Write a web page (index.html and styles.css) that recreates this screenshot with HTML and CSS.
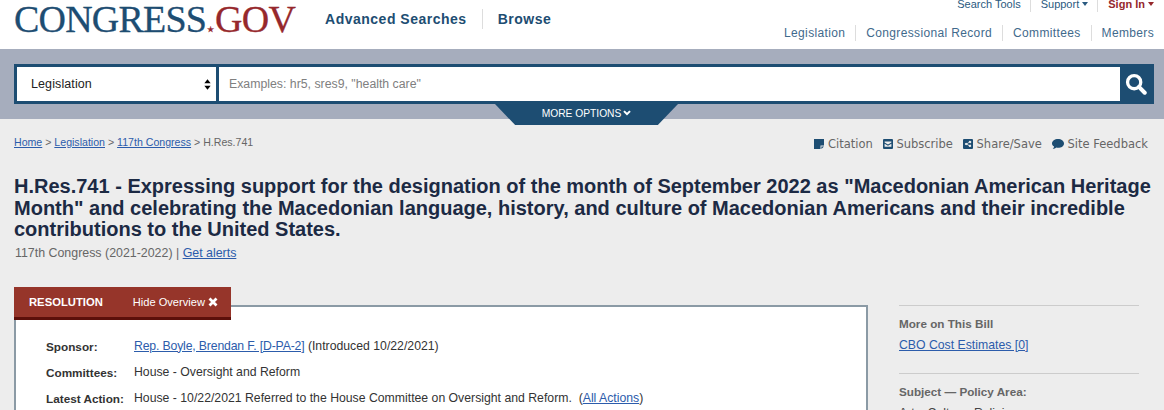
FILE: index.html
```html
<!DOCTYPE html>
<html lang="en">
<head>
    <meta charset="UTF-8">
    <meta name="viewport" content="width=device-width, initial-scale=1.0">
    <link rel="stylesheet" href="styles.css">
    <title>H.Res.741 - Congress.gov</title>
</head>
<body>
    <header class="site-header">
        <a class="logo" href="#">CONGRESS<span class="logo-gov"><span class="logo-star">★</span>GOV</span></a>
        <nav class="main-nav">
            <a href="#">Advanced Searches</a>
            <a href="#">Browse</a>
        </nav>
        <div class="header-right">
            <nav class="util-nav">
                <a href="#">Search Tools</a>
                <a href="#">Support <span class="caret"></span></a>
                <a class="sign-in" href="#">Sign In <span class="caret"></span></a>
            </nav>
            <nav class="collection-nav">
                <a href="#">Legislation</a>
                <a href="#">Congressional Record</a>
                <a href="#">Committees</a>
                <a href="#">Members</a>
            </nav>
        </div>
    </header>

    <section class="search-band">
        <form class="search-box">
            <div class="search-select">
                <span>Legislation</span>
                <svg class="updown" viewBox="0 0 8 12" width="7" height="11"><path d="M4 0l3.6 4.6H.4zM4 12L.4 7.4h7.2z"/></svg>
            </div>
            <div class="search-input">Examples: hr5, sres9, "health care"</div>
            <button class="search-btn" type="button" aria-label="Search">
                <svg viewBox="0 0 24 24" width="22" height="22"><circle cx="10" cy="10" r="7.2" fill="none" stroke="#fff" stroke-width="3.6"/><path d="M15.2 15.2l6.3 6.3" stroke="#fff" stroke-width="4.4" stroke-linecap="round"/></svg>
            </button>
        </form>
        <a class="more-options" href="#">MORE OPTIONS
            <svg viewBox="0 0 10 8" width="8" height="6"><path d="M1 1.500l4 4 4-4" fill="none" stroke="#fff" stroke-width="2.800"/></svg>
        </a>
    </section>

    <main class="content">
        <div class="crumb-row">
            <div class="breadcrumb">
                <a href="#">Home</a> &gt; <a href="#">Legislation</a> &gt; <a href="#">117th Congress</a> &gt; H.Res.741
            </div>
            <div class="tools">
                <a href="#">
                    <svg viewBox="0 0 10 10" width="10" height="10"><path d="M0 0h10v6.5H6.5V10H0zM7.4 7.4H10L7.4 10z"/></svg>
                    Citation
                </a>
                <a href="#">
                    <svg viewBox="0 0 10 10" width="10" height="10"><path fill-rule="evenodd" d="M1 0h8a1 1 0 0 1 1 1v8a1 1 0 0 1-1 1H1a1 1 0 0 1-1-1V1a1 1 0 0 1 1-1zM1.6 2.4v1L5 5.4l3.4-2v-1zM1.6 4.8v3h6.8v-3L5 6.8z"/></svg>
                    Subscribe
                </a>
                <a href="#">
                    <svg viewBox="0 0 10 10" width="10" height="10"><path fill-rule="evenodd" d="M1 0h8a1 1 0 0 1 1 1v8a1 1 0 0 1-1 1H1a1 1 0 0 1-1-1V1a1 1 0 0 1 1-1zM7 1.800a1.200 1.200 0 0 0-1.200 1.400L4 4.200a1.200 1.200 0 1 0 0 1.600l1.800 1a1.200 1.200 0 1 0 .4-.8L4.500 5.200v-.4L6.200 3.800A1.200 1.200 0 1 0 7 1.800z"/></svg>
                    Share/Save
                </a>
                <a href="#">
                    <svg viewBox="0 0 12 10" width="12" height="10"><path d="M6 0c3.300 0 6 1.900 6 4.400S9.300 8.800 6 8.800c-.6 0-1.100-.1-1.600-.2C3.500 9.400 2.200 10 .8 10c.7-.7 1.200-1.500 1.300-2.400C.8 6.800 0 5.700 0 4.400 0 1.900 2.700 0 6 0z"/></svg>
                    Site Feedback
                </a>
            </div>
        </div>

        <h1 class="bill-title">H.Res.741 - Expressing support for the designation of the month of September 2022 as "Macedonian American Heritage Month" and celebrating the Macedonian language, history, and culture of Macedonian Americans and their incredible contributions to the United States.</h1>
        <p class="bill-sub">117th Congress (2021-2022) | <a href="#">Get alerts</a></p>

        <div class="columns">
            <div class="overview">
                <div class="overview-tab">
                    <span class="tab-type">RESOLUTION</span>
                    <a href="#">Hide Overview
                        <svg viewBox="0 0 10 10" width="10" height="10"><path d="M1.500 1.500l7 7M8.500 1.500l-7 7" stroke="#fff" stroke-width="2.800"/></svg>
                    </a>
                </div>
                <div class="overview-card">
                    <div class="overview-row">
                        <span class="row-label">Sponsor:</span>
                        <span><a class="sponsor-link" href="#">Rep. Boyle, Brendan F. [D-PA-2]</a> (Introduced 10/22/2021)</span>
                    </div>
                    <div class="overview-row">
                        <span class="row-label">Committees:</span>
                        <span>House - Oversight and Reform</span>
                    </div>
                    <div class="overview-row">
                        <span class="row-label">Latest Action:</span>
                        <span>House - 10/22/2021 Referred to the House Committee on Oversight and Reform.&nbsp; (<a href="#">All Actions</a>)</span>
                    </div>
                </div>
            </div>

            <aside class="sidebar">
                <div class="side-block">
                    <h3>More on This Bill</h3>
                    <a href="#">CBO Cost Estimates [0]</a>
                </div>
                <div class="side-block">
                    <h3>Subject — Policy Area:</h3>
                    <span>Arts, Culture, Religion</span>
                </div>
            </aside>
        </div>
    </main>
</body>
</html>
```

FILE: styles.css
```css
html, body {
    height: 410px;
    overflow: hidden;
}

body {
    margin: 0;
    background-color: #ededed;
    font-family: "Liberation Sans", Arial, sans-serif;
    font-size: 12px;
    color: #333;
}

a {
    color: #2c5cab;
}

/* header */
.site-header {
    display: flex;
    height: 49px;
    background-color: white;
    padding: 0 10px 0 14px;
}

.logo {
    font-family: "Liberation Serif", "Times New Roman", serif;
    font-size: 38px;
    line-height: 38px;
    letter-spacing: -0.800px;
    color: #1d4d72;
    text-decoration: none;
    white-space: nowrap;
    -webkit-text-stroke: 0.300px;
}

.logo-gov {
    color: #96282c;
}

.logo-star {
    font-size: 8px;
    letter-spacing: 0;
    margin: 0 1px;
}

.main-nav {
    display: flex;
    align-items: center;
    height: 20px;
    margin: 9px 0 0 30px;
}

.main-nav a {
    font-size: 14px;
    font-weight: bold;
    letter-spacing: 0.500px;
    color: #1d4d72;
    text-decoration: none;
    padding: 0 15px;
    line-height: 20px;
}

.main-nav a:first-child {
    padding-left: 0;
}

.main-nav a + a {
    border-left: 1px solid #ddd;
}

.header-right {
    margin-left: auto;
    display: flex;
    flex-direction: column;
    align-items: flex-end;
}

.util-nav {
    display: flex;
    height: 13px;
    margin-top: -1px;
}

.util-nav a {
    font-size: 11px;
    line-height: 11px;
    color: #2a5a80;
    text-decoration: none;
    padding: 0 9px 0 10px;
    border-left: 1px solid #ddd;
}

.util-nav a:first-child {
    border-left: none;
}

.util-nav a:last-child {
    padding-right: 0;
}

.util-nav .sign-in {
    color: #96282c;
    font-weight: bold;
}

.caret {
    display: inline-block;
    border: 3.500px solid transparent;
    border-top: 4px solid currentColor;
    border-bottom: none;
    vertical-align: 2px;
}

.collection-nav {
    display: flex;
    margin-top: 13px;
}

.collection-nav a {
    font-size: 12px;
    line-height: 16px;
    letter-spacing: 0.350px;
    color: #3f6a8c;
    text-decoration: none;
    padding: 0 10px;
    border-left: 1px solid #ddd;
}

.collection-nav a:first-child {
    border-left: none;
}

.collection-nav a:last-child {
    padding-right: 0;
}

/* search */
.search-band {
    position: relative;
    height: 70px;
    background-color: #a6adbd;
    padding: 15px 10px 0 14px;
    box-sizing: border-box;
}

.search-box {
    display: flex;
    height: 40px;
    box-sizing: border-box;
    border: 3px solid #1d4d72;
    background-color: white;
}

.search-select {
    display: flex;
    align-items: center;
    justify-content: space-between;
    box-sizing: border-box;
    width: 202px;
    padding: 0 5px 0 14px;
    border-right: 3px solid #1d4d72;
    font-size: 12.500px;
    letter-spacing: 0.100px;
    color: #222;
}

.search-input {
    flex: 1;
    padding-left: 10px;
    line-height: 34px;
    font-size: 12.300px;
    color: #808080;
}

.search-btn {
    width: 31px;
    margin: 0;
    padding: 0;
    border: none;
    background-color: #1d4d72;
    display: flex;
    align-items: center;
    justify-content: center;
}

.more-options {
    position: absolute;
    left: 495px;
    top: 55px;
    width: 183px;
    height: 21px;
    padding-bottom: 3px;
    box-sizing: border-box;
    display: flex;
    align-items: center;
    justify-content: center;
    gap: 2px;
    background-color: #1d4d72;
    clip-path: polygon(0 0, 100% 0, 89% 100%, 11% 100%);
    color: white;
    font-size: 10.250px;
    text-decoration: none;
}

/* main */
.content {
    padding: 0 10px 0 14px;
}

.crumb-row {
    display: flex;
    justify-content: space-between;
    padding-top: 17px;
    height: 30px;
}

.breadcrumb {
    font-size: 10.600px;
    line-height: 12px;
    color: #666;
}

.tools {
    display: flex;
    gap: 10px;
    padding-right: 6px;
    margin-top: 2px;
}

.tools a {
    font-family: "DejaVu Sans", Verdana, sans-serif;
    font-size: 11.500px;
    line-height: 13px;
    color: #666;
    text-decoration: none;
}

.tools svg {
    fill: #1d4d72;
    vertical-align: -1px;
}

.bill-title {
    margin: 10px 0 0 0;
    font-size: 20px;
    line-height: 21.500px;
    font-weight: bold;
    color: #1c2a44;
}

.bill-sub {
    margin: 5px 0 0 1px;
    font-size: 12.400px;
    line-height: 15px;
    color: #666;
}

.columns {
    display: flex;
    margin-top: 26px;
}

.overview {
    width: 854px;
}

.overview-tab {
    position: relative;
    display: flex;
    align-items: center;
    width: 217px;
    height: 30px;
    margin-bottom: -15px;
    background-color: #96352a;
    border-bottom: 3px solid #5c0f0a;
    color: white;
}

.tab-type {
    font-size: 11.250px;
    font-weight: bold;
    margin-left: 15px;
}

.overview-tab a {
    margin-left: 30px;
    font-size: 11.100px;
    color: white;
    text-decoration: none;
}

.overview-tab svg {
    vertical-align: -1px;
}

.overview-card {
    height: 120px;
    padding-top: 32px;
    background-color: white;
    border: 2px solid #8b9aa5;
    border-bottom: none;
    box-sizing: border-box;
}

.overview-row {
    display: flex;
    font-size: 12.250px;
    line-height: 15px;
    margin-bottom: 11px;
}

.sponsor-link {
    letter-spacing: -0.160px;
}

.row-label {
    width: 118px;
    padding-left: 30px;
    box-sizing: border-box;
    flex-shrink: 0;
    font-size: 11.750px;
    font-weight: bold;
}

.sidebar {
    width: 240px;
    margin: 18px 0 0 31px;
}

.side-block {
    border-top: 1px solid #ccc;
    padding-top: 10px;
    height: 57px;
    font-size: 12.250px;
    color: #444;
}

.side-block h3 {
    margin: 0 0 7px;
    font-size: 11.700px;
    line-height: 15px;
    color: #666;
}
```
